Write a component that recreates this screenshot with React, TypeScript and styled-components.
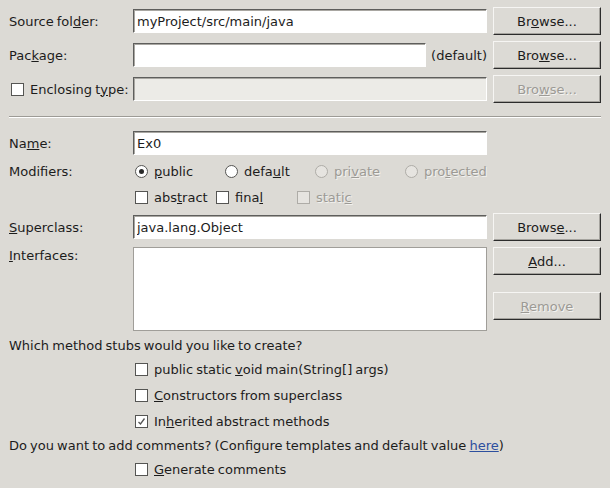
import React from "react";
import styled, { createGlobalStyle, css } from "styled-components";

const GlobalStyle = createGlobalStyle`
  html, body {
    margin: 0;
    padding: 0;
    background: #dcdad5;
  }
  body {
    font-family: "DejaVu Sans", "Liberation Sans", sans-serif;
    font-size: 13px;
    color: #1c1c1c;
    word-spacing: -1px;
  }
  * { box-sizing: border-box; }
`;

const Page = styled.div`
  width: 610px;
  height: 488px;
  padding: 7px 9px 0 9px;
  display: flex;
  flex-direction: column;
  background: #dcdad5;
  overflow: hidden;
`;

const FormRow = styled.div<{ $h: number; $mt?: number; $align?: string }>`
  display: grid;
  grid-template-columns: 124px 354px 1fr;
  align-items: ${(p) => p.$align || "center"};
  height: ${(p) => p.$h}px;
  margin-top: ${(p) => p.$mt ?? 0}px;
`;

const Label = styled.div<{ $pt?: number }>`
  line-height: 15px;
  white-space: nowrap;
  padding-top: ${(p) => p.$pt ?? 0}px;
`;

const inputEdges = css`
  border-style: solid;
  border-width: 1px;
  border-color: #5e5e5c #ffffff #ffffff #5e5e5c;
  box-shadow: inset 1px 1px 0 #a9a7a2;
`;

const TextInput = styled.input<{ disabled?: boolean }>`
  ${inputEdges};
  height: 24px;
  width: 100%;
  padding: 0 0 0 3px;
  font-family: inherit;
  font-size: 13px;
  word-spacing: -1px;
  color: #1c1c1c;
  background: ${(p) => (p.disabled ? "#ecebe7" : "#ffffff")};
  outline: none;
  margin: 0;
`;

const FieldWithSuffix = styled.div`
  display: flex;
  align-items: center;
  gap: 5px;
  & > input { flex: 1; }
`;

const Suffix = styled.span`
  white-space: nowrap;
`;

const Button = styled.div<{ $disabled?: boolean }>`
  justify-self: end;
  width: 108px;
  height: 28px;
  display: flex;
  align-items: center;
  justify-content: center;
  border-style: solid;
  border-width: 1px;
  border-color: #f6f5f3 #2c2c2c #2c2c2c #f6f5f3;
  box-shadow: inset -1px -1px 0 #a5a39e;
  background: #dcdad5;
  color: ${(p) => (p.$disabled ? "#9c9a95" : "#1c1c1c")};
  text-shadow: ${(p) => (p.$disabled ? "1px 1px 0 #f4f3f1" : "none")};
  white-space: nowrap;
`;

const ButtonColumn = styled.div`
  justify-self: end;
  display: flex;
  flex-direction: column;
  gap: 17px;
`;

const ListBox = styled.div`
  height: 84px;
  background: #ffffff;
  border: 1px solid #a09e99;
`;

const Separator = styled.div`
  height: 2px;
  margin-top: 13px;
  margin-bottom: 11px;
  border-top: 1px solid #9d9b96;
  border-bottom: 1px solid #ffffff;
`;

const OptionGrid = styled.div<{ $col: number; $n: number }>`
  display: grid;
  grid-template-columns: repeat(${(p) => p.$n}, ${(p) => p.$col}px);
  align-items: center;
`;

const Option = styled.label<{ $disabled?: boolean; $ml?: number }>`
  display: flex;
  align-items: center;
  gap: 6px;
  margin-left: ${(p) => p.$ml ?? 2}px;
  white-space: nowrap;
  line-height: 15px;
  color: ${(p) => (p.$disabled ? "#9c9a95" : "#1c1c1c")};
  text-shadow: ${(p) => (p.$disabled ? "1px 1px 0 #f2f1ee" : "none")};
`;

const Box = styled.span<{ $disabled?: boolean }>`
  width: 13px;
  height: 13px;
  flex: none;
  display: inline-flex;
  align-items: center;
  justify-content: center;
  border: 1px solid ${(p) => (p.$disabled ? "#aeaca7" : "#555553")};
  background: ${(p) => (p.$disabled ? "#e6e4e0" : "#ffffff")};
`;

const Circle = styled(Box)`
  border-radius: 50%;
`;

const Dot = styled.span`
  width: 5px;
  height: 5px;
  border-radius: 50%;
  background: #2a2a2a;
`;

const PlainRow = styled.div<{ $h: number; $mt: number; $indent?: number }>`
  display: flex;
  align-items: center;
  height: ${(p) => p.$h}px;
  margin-top: ${(p) => p.$mt}px;
  padding-left: ${(p) => p.$indent ?? 0}px;
  line-height: 15px;
  white-space: nowrap;
`;

const Link = styled.span`
  color: #2d4f9e;
  text-decoration: underline;
`;

type CheckProps = {
  label: React.ReactNode;
  checked?: boolean;
  disabled?: boolean;
  ml?: number;
};

const Check = ({ label, checked, disabled, ml }: CheckProps) => (
  <Option $disabled={disabled} $ml={ml}>
    <Box $disabled={disabled}>
      {checked && (
        <svg width="9" height="9" viewBox="0 0 9 9">
          <polyline
            points="1.5,5 3.5,7 7.5,1.5"
            fill="none"
            stroke="#555"
            strokeWidth="1.3"
          />
        </svg>
      )}
    </Box>
    <span>{label}</span>
  </Option>
);

const Radio = ({ label, checked, disabled }: CheckProps) => (
  <Option $disabled={disabled}>
    <Circle $disabled={disabled}>{checked && <Dot />}</Circle>
    <span>{label}</span>
  </Option>
);

export default function App() {
  return (
    <>
      <GlobalStyle />
      <Page>
        <FormRow $h={28}>
          <Label>
            Source fol<u>d</u>er:
          </Label>
          <TextInput defaultValue="myProject/src/main/java" readOnly />
          <Button>
            <span>
              Br<u>o</u>wse...
            </span>
          </Button>
        </FormRow>

        <FormRow $h={28} $mt={6}>
          <Label>
            Pac<u>k</u>age:
          </Label>
          <FieldWithSuffix>
            <TextInput defaultValue="" readOnly />
            <Suffix>(default)</Suffix>
          </FieldWithSuffix>
          <Button>
            <span>
              Bro<u>w</u>se...
            </span>
          </Button>
        </FormRow>

        <FormRow $h={28} $mt={6}>
          <Check
            ml={2}
            label={
              <>
                Enclosing t<u>y</u>pe:
              </>
            }
          />
          <TextInput disabled defaultValue="" readOnly />
          <Button $disabled>
            <span>
              Bro<u>w</u>se...
            </span>
          </Button>
        </FormRow>

        <Separator />

        <FormRow $h={28}>
          <Label>
            Na<u>m</u>e:
          </Label>
          <TextInput defaultValue="Ex0" readOnly />
        </FormRow>

        <FormRow $h={20} $mt={4}>
          <Label>Modifiers:</Label>
          <OptionGrid $col={90} $n={4}>
            <Radio checked label={<><u>p</u>ublic</>} />
            <Radio label={<>defa<u>u</u>lt</>} />
            <Radio disabled label={<>pri<u>v</u>ate</>} />
            <Radio disabled label={<>pro<u>t</u>ected</>} />
          </OptionGrid>
        </FormRow>

        <FormRow $h={20} $mt={6}>
          <span />
          <OptionGrid $col={81} $n={3}>
            <Check label={<>abs<u>t</u>ract</>} />
            <Check label={<>fina<u>l</u></>} />
            <Check disabled label={<>stati<u>c</u></>} />
          </OptionGrid>
        </FormRow>

        <FormRow $h={28} $mt={6}>
          <Label>
            <u>S</u>uperclass:
          </Label>
          <TextInput defaultValue="java.lang.Object" readOnly />
          <Button>
            <span>
              Brows<u>e</u>...
            </span>
          </Button>
        </FormRow>

        <FormRow $h={84} $mt={6} $align="start">
          <Label $pt={1}>
            <u>I</u>nterfaces:
          </Label>
          <ListBox />
          <ButtonColumn>
            <Button>
              <span>
                <u>A</u>dd...
              </span>
            </Button>
            <Button $disabled>
              <span>
                <u>R</u>emove
              </span>
            </Button>
          </ButtonColumn>
        </FormRow>

        <PlainRow $h={20} $mt={4}>
          Which method stubs would you like to create?
        </PlainRow>
        <PlainRow $h={20} $mt={4} $indent={124}>
          <Check label={<>public static <u>v</u>oid main(String[] args)</>} />
        </PlainRow>
        <PlainRow $h={20} $mt={6} $indent={124}>
          <Check label={<><u>C</u>onstructors from superclass</>} />
        </PlainRow>
        <PlainRow $h={20} $mt={6} $indent={124}>
          <Check checked label={<>In<u>h</u>erited abstract methods</>} />
        </PlainRow>
        <PlainRow $h={20} $mt={4}>
          <span>
            Do you want to add comments? (Configure templates and default value{" "}
            <Link>here</Link>)
          </span>
        </PlainRow>
        <PlainRow $h={20} $mt={4} $indent={124}>
          <Check label={<><u>G</u>enerate comments</>} />
        </PlainRow>
      </Page>
    </>
  );
}
